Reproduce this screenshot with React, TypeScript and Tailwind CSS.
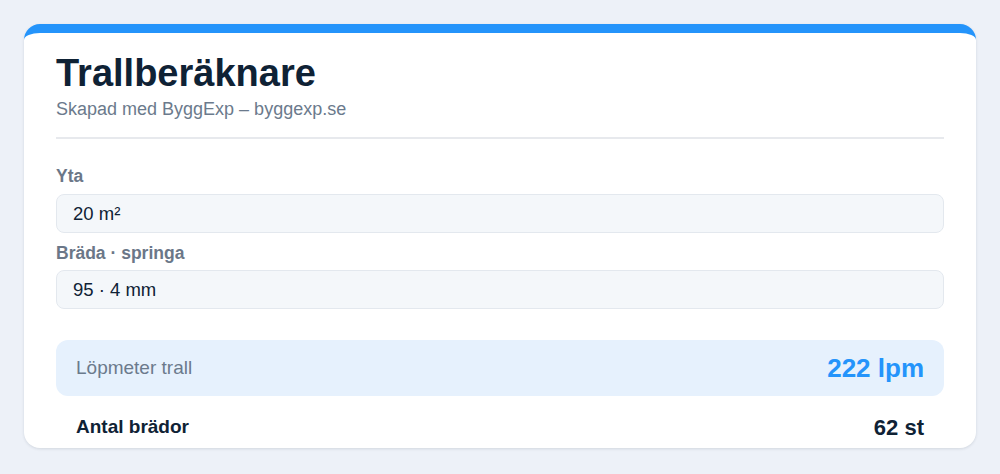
export default function App() {
  return (
    <div
      className="min-h-[474px] bg-[#edf1f8] p-6"
      style={{ fontFamily: '"Liberation Sans", Arial, Helvetica, sans-serif' }}
    >
      <div className="h-[424px] overflow-hidden rounded-2xl border-t-[9px] border-[#2494fb] bg-white px-8 pt-[17px] shadow-[0_1px_3px_rgba(15,34,53,0.12)]">
        <h1 className="text-[38px] font-bold leading-[46px] text-[#0f2235]">Trallberäknare</h1>
        <p className="mt-[2px] text-[18px] leading-[22px] text-[#6b7a8c]">Skapad med ByggExp – byggexp.se</p>
        <div className="mt-[17px] h-[2px] bg-[#e7e9ed]" />

        <div className="mt-[27px] flex flex-col">
          <label className="text-[17.5px] font-bold leading-[20px] text-[#6b7788]">Yta</label>
          <div className="mt-[8px] flex h-[39px] items-center rounded-lg border border-[#e3e8ee] bg-[#f4f7fa] px-4 text-[18.5px] text-[#0f2235]">
            20 m²
          </div>
          <label className="mt-[10px] text-[17.5px] font-bold leading-[20px] text-[#6b7788]">Bräda · springa</label>
          <div className="mt-[7px] flex h-[39px] items-center rounded-lg border border-[#e3e8ee] bg-[#f4f7fa] px-4 text-[18.5px] text-[#0f2235]">
            95 · 4 mm
          </div>
        </div>

        <div className="mt-[31px] flex h-[56px] items-center justify-between rounded-xl bg-[#e6f1fd] px-5">
          <span className="text-[19px] text-[#6b7a8c]">Löpmeter trall</span>
          <span className="text-[26px] font-bold text-[#2494fb]">222 lpm</span>
        </div>

        <div className="mt-[15px] flex items-center justify-between px-5">
          <span className="text-[19px] font-bold text-[#0f2235]">Antal brädor</span>
          <span className="text-[22px] font-bold text-[#0f2235]">62 st</span>
        </div>
      </div>
    </div>
  );
}
